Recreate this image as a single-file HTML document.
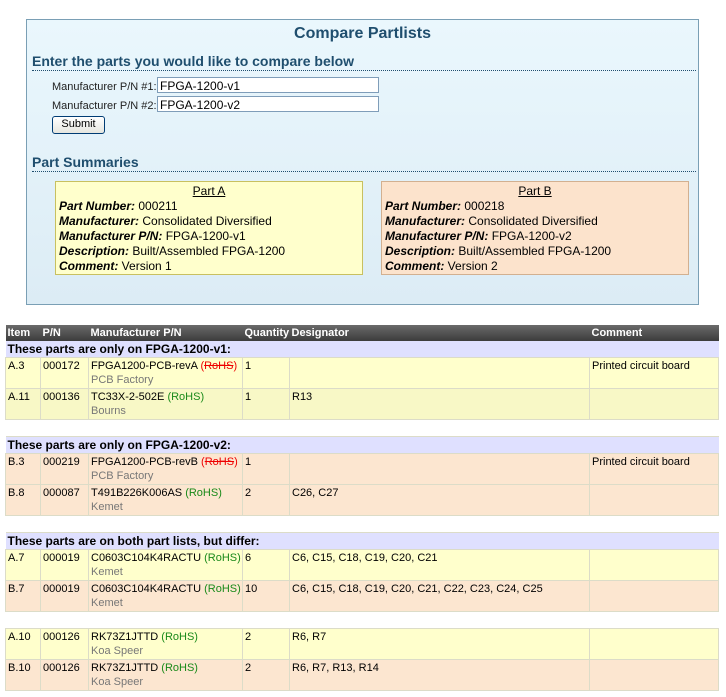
<!DOCTYPE html>
<html><head><style>
body{margin:0;width:726px;height:697px;background:#fff;font-family:"Liberation Sans",sans-serif;font-size:12px;color:#000;position:relative;overflow:hidden}
#panel{position:absolute;left:26px;top:19px;width:671px;height:284px;border:1px solid #7a9fb5;background:linear-gradient(#eaf7fd,#dcecf5)}
h1{position:absolute;left:0;width:100%;top:5px;margin:0;text-align:center;font-size:16px;color:#1f4e6e;font-weight:bold}
.h2{position:absolute;left:5px;width:664px;margin:0;font-size:14px;font-weight:bold;color:#1f4e6e;border-bottom:1px dotted #1f4e6e;padding-bottom:1px}
.lbl{position:absolute;left:25px;font-size:11px;color:#222}
.inp{position:absolute;left:130px;width:219px;height:16px;border:1px solid #7f9db9;background:#fff;font-size:12px;line-height:16px;padding-left:2px;box-sizing:border-box;width:222px}
.btn{position:absolute;left:25px;top:96px;width:51px;height:16px;border:1px solid #003c74;border-radius:3px;background:linear-gradient(#fff,#e6e6df);font-size:11px;text-align:center;line-height:15px}
.box{position:absolute;top:161px;width:308px;height:94px;padding:2px 3px;box-sizing:border-box;font-size:12px;line-height:15px}
.box .t{text-align:center;text-decoration:underline}
.box b{font-style:italic}
table{position:absolute;left:5px;top:325px;width:713px;border-collapse:collapse;table-layout:fixed;font-size:11px}
td,th{padding:1px 2px;vertical-align:top;border:1px solid #dcdcc8;line-height:14px;overflow:hidden;white-space:nowrap}
th{background:linear-gradient(#6a6a6a,#3c3c3c);color:#fff;text-align:left;font-weight:bold;height:14px;border:none;padding:1px 2px}
.g td{background:#dfe0ff;font-weight:bold;font-size:12px;border:none;height:13px}
.a td{background:#ffffcc}
.a2 td{background:#f8f8c6}
.b td{background:#fce6d0}
.e td{background:#fff;height:14px;border-left:none;border-right:none}
.m{color:#777}
.r{color:#e00;}
.r s{color:#e00}
.ok{color:#1a8a1a}
tr.d td{height:28px}
</style></head><body>
<div id="panel">
<h1>Compare Partlists</h1>
<div class="h2" style="top:33px">Enter the parts you would like to compare below</div>
<div class="lbl" style="top:61px">Manufacturer P/N #1:</div>
<div class="inp" style="top:57px">FPGA-1200-v1</div>
<div class="lbl" style="top:80px">Manufacturer P/N #2:</div>
<div class="inp" style="top:76px">FPGA-1200-v2</div>
<div class="btn">Submit</div>
<div class="h2" style="top:134px">Part Summaries</div>
<div class="box" style="left:28px;background:#ffffcc;border:1px solid #c8c060">
<div class="t">Part A</div>
<b>Part Number:</b> 000211<br><b>Manufacturer:</b> Consolidated Diversified<br><b>Manufacturer P/N:</b> FPGA-1200-v1<br><b>Description:</b> Built/Assembled FPGA-1200<br><b>Comment:</b> Version 1</div>
<div class="box" style="left:354px;background:#fce3cc;border:1px solid #d2b090">
<div class="t">Part B</div>
<b>Part Number:</b> 000218<br><b>Manufacturer:</b> Consolidated Diversified<br><b>Manufacturer P/N:</b> FPGA-1200-v2<br><b>Description:</b> Built/Assembled FPGA-1200<br><b>Comment:</b> Version 2</div>
</div>
<table>
<colgroup><col style="width:35px"><col style="width:48px"><col style="width:154px"><col style="width:47px"><col style="width:300px"><col style="width:129px"></colgroup>
<tr><th>Item</th><th>P/N</th><th>Manufacturer P/N</th><th>Quantity</th><th>Designator</th><th>Comment</th></tr>
<tr class="g"><td colspan="6">These parts are only on FPGA-1200-v1:</td></tr>
<tr class="a d"><td>A.3</td><td>000172</td><td>FPGA1200-PCB-revA <span class="r">(<s>RoHS</s>)</span><br><span class="m">PCB Factory</span></td><td>1</td><td></td><td>Printed circuit board</td></tr>
<tr class="a2 d"><td>A.11</td><td>000136</td><td>TC33X-2-502E <span class="ok">(RoHS)</span><br><span class="m">Bourns</span></td><td>1</td><td>R13</td><td></td></tr>
<tr class="e"><td colspan="6"></td></tr>
<tr class="g"><td colspan="6">These parts are only on FPGA-1200-v2:</td></tr>
<tr class="b d"><td>B.3</td><td>000219</td><td>FPGA1200-PCB-revB <span class="r">(<s>RoHS</s>)</span><br><span class="m">PCB Factory</span></td><td>1</td><td></td><td>Printed circuit board</td></tr>
<tr class="b d"><td>B.8</td><td>000087</td><td>T491B226K006AS <span class="ok">(RoHS)</span><br><span class="m">Kemet</span></td><td>2</td><td>C26, C27</td><td></td></tr>
<tr class="e"><td colspan="6"></td></tr>
<tr class="g"><td colspan="6">These parts are on both part lists, but differ:</td></tr>
<tr class="a d"><td>A.7</td><td>000019</td><td>C0603C104K4RACTU <span class="ok">(RoHS)</span><br><span class="m">Kemet</span></td><td>6</td><td>C6, C15, C18, C19, C20, C21</td><td></td></tr>
<tr class="b d"><td>B.7</td><td>000019</td><td>C0603C104K4RACTU <span class="ok">(RoHS)</span><br><span class="m">Kemet</span></td><td>10</td><td>C6, C15, C18, C19, C20, C21, C22, C23, C24, C25</td><td></td></tr>
<tr class="e"><td colspan="6"></td></tr>
<tr class="a d"><td>A.10</td><td>000126</td><td>RK73Z1JTTD <span class="ok">(RoHS)</span><br><span class="m">Koa Speer</span></td><td>2</td><td>R6, R7</td><td></td></tr>
<tr class="b d"><td>B.10</td><td>000126</td><td>RK73Z1JTTD <span class="ok">(RoHS)</span><br><span class="m">Koa Speer</span></td><td>2</td><td>R6, R7, R13, R14</td><td></td></tr>
</table>
</body></html>
